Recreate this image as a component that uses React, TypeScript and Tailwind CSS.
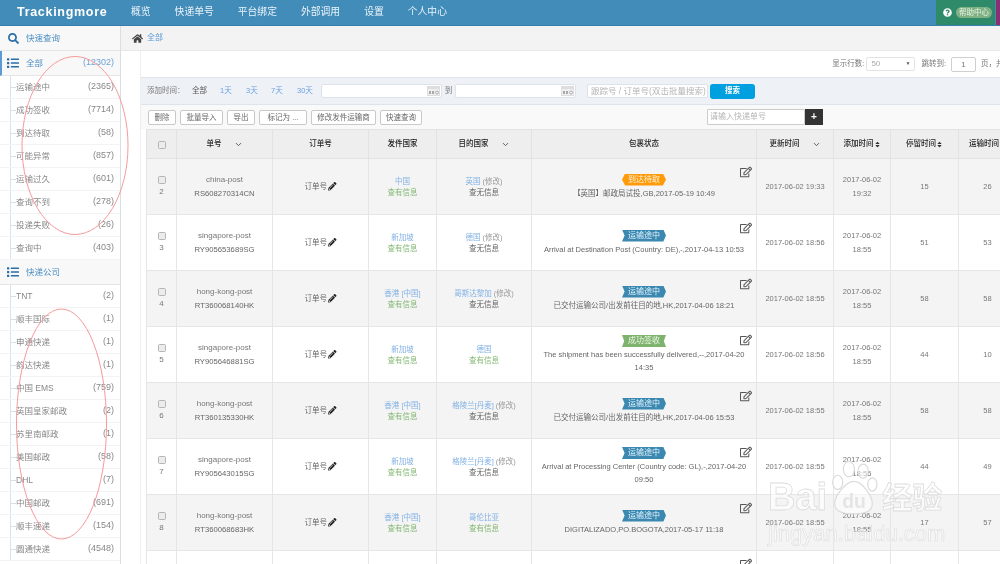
import { FaHome, FaSearch, FaList, FaPencilAlt, FaRegEdit, FaSort, FaQuestionCircle } from 'react-icons/fa';
import { ChevronDown } from 'lucide-react';

const FONT = "font-['Liberation_Sans','Noto_Sans_CJK_SC',sans-serif]";

const navItems = ['概览', '快递单号', '平台绑定', '外部调用', '设置', '个人中心'];
const statusCounts = [
  ['运输途中', '(2365)'], ['成功签收', '(7714)'], ['到达待取', '(58)'], ['可能异常', '(857)'],
  ['运输过久', '(601)'], ['查询不到', '(278)'], ['投递失败', '(26)'], ['查询中', '(403)'],
];
const carriers = [
  ['TNT', '(2)'], ['顺丰国际', '(1)'], ['申通快递', '(1)'], ['韵达快递', '(1)'], ['中国 EMS', '(759)'],
  ['英国皇家邮政', '(2)'], ['苏里南邮政', '(1)'], ['美国邮政', '(58)'], ['DHL', '(7)'], ['中国邮政', '(691)'],
  ['顺丰速递', '(154)'], ['圆通快递', '(4548)'],
];
const toolButtons = [
  ['删除', 'w-[28px]'], ['批量导入', 'w-[43px]'], ['导出', 'w-[28px]'], ['标记为 ...', 'w-[48px]'],
  ['修改发件运输商', 'w-[65px]'], ['快速查询', 'w-[42px]'],
];

type Row = {
  no: number; carrier: string; code: string; from: string; to: string; edit: boolean; toHas: boolean;
  badge: 'orange' | 'blue' | 'green'; msg: string; updated: string; added: string; stay: string; transit: string;
};

const rows: Row[] = [
  { no: 2, carrier: 'china-post', code: 'RS608270314CN', from: '中国', to: '英国', edit: true, toHas: false, badge: 'orange', msg: '【英国】邮政局试投,GB,2017-05-19 10:49', updated: '19:33', added: '19:32', stay: '15', transit: '26' },
  { no: 3, carrier: 'singapore-post', code: 'RY905653689SG', from: '新加坡', to: '德国', edit: true, toHas: false, badge: 'blue', msg: 'Arrival at Destination Post (Country: DE),-,2017-04-13 10:53', updated: '18:56', added: '18:55', stay: '51', transit: '53' },
  { no: 4, carrier: 'hong-kong-post', code: 'RT360068140HK', from: '香港 [中国]', to: '哥斯达黎加', edit: true, toHas: false, badge: 'blue', msg: '已交付运输公司/出发前往目的地,HK,2017-04-06 18:21', updated: '18:55', added: '18:55', stay: '58', transit: '58' },
  { no: 5, carrier: 'singapore-post', code: 'RY905646881SG', from: '新加坡', to: '德国', edit: false, toHas: true, badge: 'green', msg: 'The shipment has been successfully delivered,--,2017-04-20 14:35', updated: '18:56', added: '18:55', stay: '44', transit: '10' },
  { no: 6, carrier: 'hong-kong-post', code: 'RT360135330HK', from: '香港 [中国]', to: '格陵兰[丹麦]', edit: true, toHas: false, badge: 'blue', msg: '已交付运输公司/出发前往目的地,HK,2017-04-06 15:53', updated: '18:55', added: '18:55', stay: '58', transit: '58' },
  { no: 7, carrier: 'singapore-post', code: 'RY905643015SG', from: '新加坡', to: '格陵兰[丹麦]', edit: true, toHas: false, badge: 'blue', msg: 'Arrival at Processing Center (Country code: GL),-,2017-04-20 09:50', updated: '18:55', added: '18:55', stay: '44', transit: '49' },
  { no: 8, carrier: 'hong-kong-post', code: 'RT360068683HK', from: '香港 [中国]', to: '哥伦比亚', edit: false, toHas: true, badge: 'blue', msg: 'DIGITALIZADO,PO.BOGOTA,2017-05-17 11:18', updated: '18:55', added: '18:55', stay: '17', transit: '57' },
  { no: 9, carrier: 'singapore-post', code: 'RY905643016SG', from: '新加坡', to: '德国', edit: true, toHas: false, badge: 'blue', msg: '已交付运输公司/出发前往目的地', updated: '18:55', added: '18:55', stay: '44', transit: '49' },
];

function SideRow({ label, count }: { label: string; count: string }) {
  return (
    <div className="h-[23px] border-b border-[#f1f3f5] pl-[10px]">
      <div className="flex h-full items-center border-l border-[#d3e4f5] pr-[6px] text-[8.5px] text-[#888]">
        <span className="h-px w-[5px] bg-[#d8dfe6]" />
        <span>{label}</span>
        <span className="ml-auto text-[9px]">{count}</span>
      </div>
    </div>
  );
}

function StatusBadge({ kind }: { kind: Row['badge'] }) {
  if (kind === 'orange') {
    return <span className="inline-block h-[12px] w-[44px] bg-[#ff9a0a] text-center text-[8px] leading-[12px] text-[#fff3d8] [clip-path:polygon(7%_0,93%_0,100%_50%,93%_100%,7%_100%,0_50%)]">到达待取</span>;
  }
  if (kind === 'green') {
    return <span className="inline-block h-[12px] w-[44px] bg-[#7db36d] text-center text-[8px] leading-[12px] text-[#eef7e8] [clip-path:polygon(0_0,100%_0,95%_50%,100%_100%,0_100%,5%_50%)]">成功签收</span>;
  }
  return <span className="inline-block h-[12px] w-[44px] bg-[#3b88b0] text-center text-[8px] leading-[12px] text-[#dff1fb] [clip-path:polygon(0_0,94%_0,100%_50%,94%_100%,0_100%,6%_50%)]">运输途中</span>;
}

function Check() {
  return <span className="inline-block h-[8px] w-[8px] rounded-[1.5px] border border-[#b5b5b5] bg-[#ececec]" />;
}

function TableRow({ row, index }: { row: Row; index: number }) {
  const cell = 'border border-[#e6e6e6] px-[4px] text-center align-middle';
  return (
    <tr className={`h-[56px] ${index % 2 === 0 ? 'bg-[#f4f4f4]' : 'bg-white'}`}>
      <td className={cell}>
        <div className="flex flex-col items-center gap-[3px]">
          <Check />
          <span className="text-[8px] leading-[10px]">{row.no}</span>
        </div>
      </td>
      <td className={`${cell} text-[8px] leading-[14px]`}>
        <div>{row.carrier}</div>
        <div className="text-[7.7px] text-[#666]">{row.code}</div>
      </td>
      <td className={`${cell} text-[7.5px]`}>
        <span className="inline-flex items-center gap-px text-[#666]">订单号<FaPencilAlt className="text-[8.5px] text-[#222]" /></span>
      </td>
      <td className={`${cell} text-[7.5px] leading-[11px]`}>
        <div className="text-[#82b1e4]">{row.from}</div>
        <div className="text-[#83b872]">查有信息</div>
      </td>
      <td className={`${cell} text-[7.5px] leading-[11px]`}>
        <div>
          <span className="text-[#82b1e4]">{row.to}</span>
          {row.edit && <span className="ml-[2px] text-[#999]">(修改)</span>}
        </div>
        <div className={row.toHas ? 'text-[#83b872]' : 'text-[#666]'}>{row.toHas ? '查有信息' : '查无信息'}</div>
      </td>
      <td className={`${cell} relative text-[7.5px] leading-[13px] text-[#666]`}>
        <FaRegEdit className="absolute right-[4px] top-[7px] text-[12px] text-[#555]" />
        <div className="flex flex-col items-center gap-px">
          <StatusBadge kind={row.badge} />
          <div className="px-[5px]">{row.msg}</div>
        </div>
      </td>
      <td className={`${cell} text-[7.5px]`}>2017-06-02 {row.updated}</td>
      <td className={`${cell} text-[7.5px] leading-[13.5px]`}>2017-06-02<br />{row.added}</td>
      <td className={`${cell} text-[7.5px]`}>{row.stay}</td>
      <td className={`${cell} text-[7.5px]`}>{row.transit}</td>
    </tr>
  );
}

function Th({ label, chevron, sort }: { label?: string; chevron?: boolean; sort?: boolean }) {
  return (
    <th className="whitespace-nowrap border border-[#e2e2e2] text-center align-middle text-[7.5px] font-medium text-[#222]">
      <span className="inline-flex items-center justify-center">
        {label}
        {chevron && <ChevronDown className="ml-[12px] h-[9px] w-[9px] text-[#555]" strokeWidth={2.5} />}
        {sort && <FaSort className="text-[7px] text-[#333]" />}
      </span>
    </th>
  );
}

function DateInput({ className }: { className: string }) {
  return (
    <div className={`flex h-[14px] items-center justify-end rounded-[2px] border border-[#dde3ea] bg-white pr-[1px] ${className}`}>
      <svg width="13" height="10" viewBox="0 0 13 10">
        <rect width="13" height="10" fill="#dedede" />
        <rect x="1" y="3" width="11" height="6" fill="#efefef" />
        <rect x="2" y="5" width="2" height="3" fill="#aaa" />
        <rect x="5" y="5" width="2" height="3" fill="#aaa" />
        <circle cx="10" cy="6.500" r="1.500" fill="none" stroke="#999" strokeWidth="0.7" />
      </svg>
    </div>
  );
}

export default function App() {
  return (
    <div className={`relative flex h-[564px] w-[1000px] flex-col overflow-hidden bg-white blur-[0.4px] ${FONT}`}>
      {/* top nav */}
      <header className="flex h-[26px] shrink-0 items-stretch border-b border-[#3a7eab] bg-[#428cb9] text-white">
        <div className="w-[131px] pl-[17px] text-[12.500px] font-bold leading-[25px] tracking-[0.7px]">Trackingmore</div>
        <nav className="flex gap-[24px] pt-[6px] text-[9.8px] leading-[12px] text-[#eaf3f9]">
          {navItems.map(n => <span key={n}>{n}</span>)}
        </nav>
        <div className="ml-auto flex w-[59px] items-center gap-[4px] bg-[#2e8a68] pl-[7px]">
          <FaQuestionCircle className="text-[9px] text-white" />
          <span className="whitespace-nowrap rounded-full bg-[#7fb184] px-[3px] text-[7.500px] leading-[11px] text-[#e6f2e3]">帮助中心</span>
        </div>
        <div className="ml-[1px] w-[4px] bg-[#8a2f72]" />
      </header>

      <div className="flex min-h-0 flex-1">
        {/* sidebar */}
        <aside className="w-[121px] shrink-0 overflow-hidden border-r border-[#d9dee3] bg-white">
          <div className="flex h-[25px] items-center gap-[7px] border-b border-[#e6e6e6] bg-[#f8f8f8] pl-[8px] text-[8.5px] text-[#4d8fc4]">
            <FaSearch className="text-[11px] text-[#2a6ea8]" />
            <span>快速查询</span>
          </div>
          <div className="flex h-[25px] items-center gap-[7px] border-b border-l-2 border-[#e6e6e6] border-l-[#5a9bd5] bg-[#f8f8f8] pl-[5px] pr-[6px] text-[8.5px] text-[#4d8fc4]">
            <FaList className="text-[12px] text-[#2a6ea8]" />
            <span>全部</span>
            <span className="ml-auto text-[9px] text-[#6fa3d8]">(12302)</span>
          </div>
          {statusCounts.map(([l, c]) => <SideRow key={l} label={l} count={c} />)}
          <div className="flex h-[25px] items-center gap-[7px] border-b border-[#e6e6e6] bg-[#f8f8f8] pl-[7px] text-[8.5px] text-[#4d8fc4]">
            <FaList className="text-[12px] text-[#2a6ea8]" />
            <span>快递公司</span>
          </div>
          {carriers.map(([l, c]) => <SideRow key={l} label={l} count={c} />)}
        </aside>

        <main className="flex min-w-0 flex-1 flex-col">
          {/* breadcrumb */}
          <div className="flex h-[25px] shrink-0 items-center gap-[4px] border-b border-[#e8e8e8] bg-[#f3f3f3] pl-[11px] text-[8px] text-[#5b9bd5]">
            <FaHome className="text-[11px] text-[#444]" />
            <span>全部</span>
          </div>

          <div className="ml-[19px] flex min-h-0 flex-1 flex-col border-l border-[#eeeeee]">
            {/* paging */}
            <div className="flex h-[26px] shrink-0 items-center justify-end overflow-hidden whitespace-nowrap text-[7.500px] text-[#777]">
              <span>显示行数:</span>
              <div className="ml-[2px] flex h-[14px] w-[49px] items-center justify-between rounded-[2px] border border-[#e3e3e3] px-[4px] text-[8px] text-[#aaa]">
                <span>50</span><span className="text-[5px] text-[#555]">▼</span>
              </div>
              <span className="ml-[6px]">跳转到:</span>
              <div className="ml-[5px] h-[15px] w-[25px] rounded-[2px] border border-[#cfcfcf] text-center text-[8px] leading-[13px]">1</div>
              <span className="ml-[5px] w-[19px] overflow-hidden">页，共</span>
            </div>

            {/* filter bar */}
            <div className="flex h-[28px] shrink-0 items-center border-y border-[#dfe4ea] bg-[#eef2f7] pl-[6px] text-[7.5px] text-[#777]">
              <span className="w-[45px]">添加时间：</span>
              <span className="w-[28px] text-[#555]">全部</span>
              <span className="w-[26px] text-[#6c9fe0]">1天</span>
              <span className="w-[25px] text-[#6c9fe0]">3天</span>
              <span className="w-[26px] text-[#6c9fe0]">7天</span>
              <span className="w-[24px] text-[#6c9fe0]">30天</span>
              <DateInput className="w-[121px]" />
              <span className="w-[13px] text-center">到</span>
              <DateInput className="w-[121px]" />
              <div className="ml-[11px] h-[14px] w-[121px] overflow-hidden whitespace-nowrap rounded-[2px] border border-[#dde3ea] bg-white pl-[3px] text-[8.5px] leading-[12px] text-[#b5b5b5]">跟踪号 / 订单号(双击批量搜索)</div>
              <button className="ml-[2px] h-[15px] w-[45px] rounded-[3px] bg-[#009fe0] text-[7.5px] font-bold text-white">搜索</button>
            </div>

            {/* toolbar */}
            <div className="flex h-[24px] shrink-0 items-center bg-[#f9f9f9] pl-[7px] text-[7.5px] text-[#666]">
              <div className="flex gap-[4px]">
                {toolButtons.map(([t, w]) => (
                  <span key={t} className={`${w} h-[15px] whitespace-nowrap rounded-[2px] border border-[#c9c9c9] bg-white text-center leading-[13px]`}>{t}</span>
                ))}
              </div>
              <div className="ml-[285px] h-[16px] w-[98px] rounded-[1px] border border-[#ccc] bg-white pl-[2px] text-[8px] leading-[14px] text-[#b5b5b5]">请输入快递单号</div>
              <div className="h-[16px] w-[18px] bg-[#333] text-center text-[10px] font-bold leading-[15px] text-white">+</div>
            </div>

            {/* table */}
            <div className="min-h-0 flex-1 overflow-hidden pl-[5px]">
              <table className="w-[870px] table-fixed border-collapse text-[#777]">
                <colgroup>
                  <col className="w-[30px]" /><col className="w-[96px]" /><col className="w-[96px]" /><col className="w-[68px]" />
                  <col className="w-[95px]" /><col className="w-[225px]" /><col className="w-[77px]" /><col className="w-[57px]" />
                  <col className="w-[68px]" /><col className="w-[58px]" />
                </colgroup>
                <thead>
                  <tr className="h-[29px] bg-[#eeeeee]">
                    <th className="border border-[#e2e2e2]"><Check /></th>
                    <Th label="单号" chevron />
                    <Th label="订单号" />
                    <Th label="发件国家" />
                    <Th label="目的国家" chevron />
                    <Th label="包裹状态" />
                    <Th label="更新时间" chevron />
                    <Th label="添加时间" sort />
                    <Th label="停留时间" sort />
                    <Th label="运输时间" sort />
                  </tr>
                </thead>
                <tbody>
                  {rows.map((r, i) => <TableRow key={r.no} row={r} index={i} />)}
                </tbody>
              </table>
            </div>
          </div>
        </main>
      </div>

      {/* hand-drawn red ellipses */}
      <svg className="pointer-events-none absolute left-0 top-0" width="140" height="564" fill="none" stroke="#f79a9a" strokeWidth="1">
        <ellipse cx="75" cy="145.500" rx="53" ry="89" />
        <ellipse cx="61.500" cy="424" rx="45" ry="115" />
      </svg>

      {/* watermark */}
      <div className="pointer-events-none absolute left-[768px] top-[460px] w-[190px]">
        <div className="flex h-[56px] items-end">
          <span className="text-[38px] font-bold leading-[38px] text-white/60 [-webkit-text-stroke:0.8px_#dcdcdc]">Bai</span>
          <svg width="54" height="55" viewBox="0 0 48 54" fill="#ffffff" fillOpacity="0.5" stroke="#dcdcdc" strokeWidth="1.2">
            <ellipse cx="8" cy="21" rx="5" ry="7" />
            <ellipse cx="19" cy="8" rx="5.500" ry="7.500" />
            <ellipse cx="33" cy="10" rx="5" ry="7" />
            <ellipse cx="42" cy="23" rx="4.500" ry="6.500" />
            <path d="M24 20c8 0 18 14 18 22 0 8-8 10-18 10S5 50 5 42c0-8 11-22 19-22z" />
            <text x="24" y="46" textAnchor="middle" fontSize="19" fontWeight="700" fill="#dcdcdc" fillOpacity="0.7" stroke="none">du</text>
          </svg>
          <span className="ml-px text-[30px] font-bold leading-[36px] text-white/60 [-webkit-text-stroke:0.8px_#dcdcdc]">经验</span>
        </div>
        <div className="mt-[6px] text-[22px] leading-[24px] text-white/60 [-webkit-text-stroke:0.6px_#dcdcdc]">jingyan.baidu.com</div>
      </div>
    </div>
  );
}
